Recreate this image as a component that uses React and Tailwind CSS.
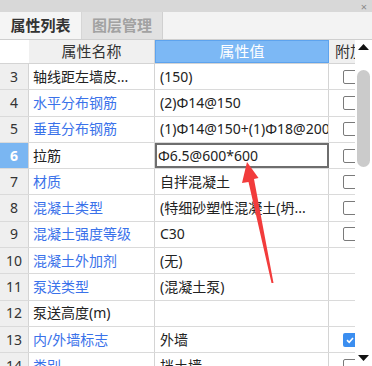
import React from 'react'

// Property grid panel: tabs, header, numbered rows, slim scrollbar, red annotation arrow.
const rows = [
  { n: 3, name: '轴线距左墙皮...', value: '(150)', link: false, box: 'off' },
  { n: 4, name: '水平分布钢筋', value: '(2)Φ14@150', link: true, box: 'off' },
  { n: 5, name: '垂直分布钢筋', value: '(1)Φ14@150+(1)Φ18@200', link: true, box: 'off' },
  { n: 6, name: '拉筋', value: 'Φ6.5@600*600', link: false, box: 'off', active: true },
  { n: 7, name: '材质', value: '自拌混凝土', link: true, box: 'off' },
  { n: 8, name: '混凝土类型', value: '(特细砂塑性混凝土(坍...', link: true, box: 'off' },
  { n: 9, name: '混凝土强度等级', value: 'C30', link: true, box: 'off' },
  { n: 10, name: '混凝土外加剂', value: '(无)', link: true, box: null },
  { n: 11, name: '泵送类型', value: '(混凝土泵)', link: true, box: null },
  { n: 12, name: '泵送高度(m)', value: '', link: false, box: null },
  { n: 13, name: '内/外墙标志', value: '外墙', link: true, box: 'on' },
  { n: 14, name: '类别', value: '挡土墙', link: true, box: 'off' },
]

function Check({ state }) {
  if (!state) return null
  if (state === 'on')
    return (
      <span className="flex h-[14px] w-[14px] shrink-0 items-center justify-center rounded-[2px] bg-[#3b8ef0]">
        <svg width="10" height="10" viewBox="0 0 10 10">
          <path d="M2 5.2 4.2 7.3 8 3" fill="none" stroke="#fff" strokeWidth="1.6" />
        </svg>
      </span>
    )
  return <span className="h-[14px] w-[14px] shrink-0 rounded-[2px] border border-[#7a7a7a] bg-white" />
}

function Row({ r }) {
  return (
    <div className="flex h-[26.3px] shrink-0 border-b border-[#dadada] text-[14px] leading-none">
      <div
        className={
          r.active
            ? 'flex w-[29px] shrink-0 items-center justify-center border-r border-[#d4d4d4] bg-[#7ab6f2] font-bold text-white'
            : 'flex w-[29px] shrink-0 items-center justify-center border-r border-[#d4d4d4] bg-[#efefef] text-[#333]'
        }
      >
        {r.n}
      </div>
      <div
        className={
          'flex w-[126px] shrink-0 items-center overflow-hidden whitespace-nowrap border-r border-[#d4d4d4] bg-white pl-[4px] ' +
          (r.link ? 'text-[#3a72ea]' : 'text-[#222]')
        }
      >
        {r.name}
      </div>
      <div
        className={
          r.active
            ? 'flex w-[174px] shrink-0 items-center overflow-hidden whitespace-nowrap border-2 border-[#6e6e6e] bg-white pl-[1px] text-[#222]'
            : 'flex w-[174px] shrink-0 items-center overflow-hidden whitespace-nowrap border-r border-[#d4d4d4] bg-white pl-[5px] text-[#222]'
        }
      >
        {r.value}
      </div>
      <div className="flex w-[26px] shrink-0 items-center overflow-hidden bg-white pl-[14px]">
        <Check state={r.box} />
      </div>
    </div>
  )
}

export default function App() {
  return (
    <div className="relative h-[366px] w-[372px] overflow-hidden bg-white font-['Noto_Sans','Noto_Sans_CJK_SC',sans-serif] text-[#222]">
      <div className="flex h-[12px] items-center justify-end bg-[#d8d8d8] pr-[5px]">
        <span className="text-[11px] leading-[11px] text-[#8a8a8a]">×</span>
      </div>

      <div className="flex h-[28px] border-b border-[#cfcfcf] bg-[#f3f3f3]">
        <div className="flex w-[82px] items-center justify-center border-r border-[#d6d6d6] bg-[#f5f5f5] text-[15px] font-bold text-[#333]">
          属性列表
        </div>
        <div className="flex w-[81px] items-center justify-center border-r border-[#d0d0d0] bg-[#e1e1e1] text-[15px] font-bold text-[#a2a2a2]">
          图层管理
        </div>
      </div>

      <div className="flex">
        <div className="flex w-[355px] shrink-0 flex-col">
          <div className="flex h-[24px] shrink-0 border-b border-[#d4d4d4] text-[15px] leading-none">
            <div className="w-[29px] shrink-0 bg-white" />
            <div className="flex w-[126px] shrink-0 items-center justify-center border-r border-[#d4d4d4] bg-[#f0f0f0] text-[#333]">
              属性名称
            </div>
            <div className="flex w-[174px] shrink-0 items-center justify-center border border-[#5da3ee] bg-[#7cb8f5] text-white">
              属性值
            </div>
            <div className="flex w-[26px] shrink-0 items-center overflow-hidden whitespace-nowrap bg-[#f0f0f0] pl-[6px] text-[#333]">
              附加
            </div>
          </div>
          {rows.map((r) => (
            <Row key={r.n} r={r} />
          ))}
        </div>

        <div className="flex h-[326px] w-[17px] shrink-0 flex-col items-center bg-white">
          <svg width="11" height="6" viewBox="0 0 11 6" className="mt-[4px]">
            <path d="M5.5 0 11 6H0z" fill="#111" />
          </svg>
          <div className="mt-[20px] h-[97px] w-[13px] rounded-full bg-[#cbcbcb]" />
          <div className="flex-1" />
          <svg width="11" height="6" viewBox="0 0 11 6" className="mb-[5px]">
            <path d="M0 0h11L5.5 6z" fill="#111" />
          </svg>
        </div>
      </div>

      <svg className="pointer-events-none absolute left-0 top-0" width="372" height="366" viewBox="0 0 372 366">
        <path
          d="M247 162 L258.5 178 L254 179 L273.5 283 L271.5 283 L248.5 182 L242 183 Z"
          fill="#f23c3c"
        />
      </svg>
    </div>
  )
}
